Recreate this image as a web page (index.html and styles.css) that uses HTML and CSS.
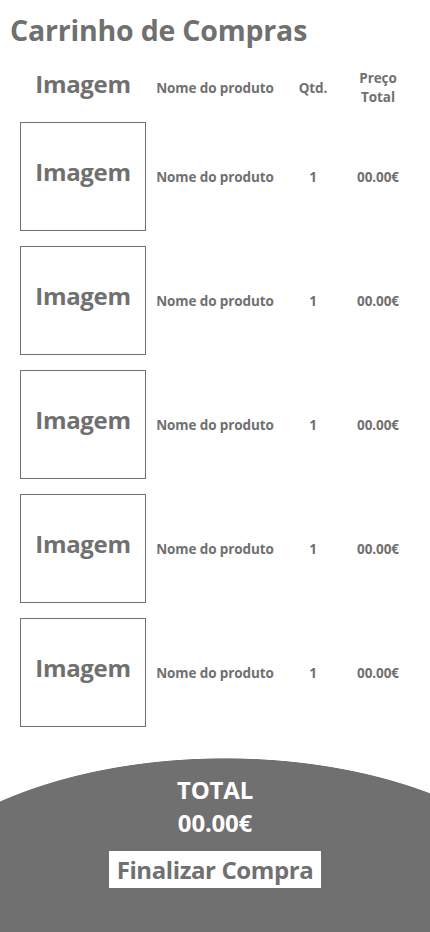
FILE: index.html
```html
<!DOCTYPE html>
<html lang="pt">

<head>
  <meta charset="UTF-8">
  <title>Carrinho de Compras</title>
  <link rel="stylesheet" href="styles.css">
</head>

<body>
  <h1 class="titulo">Carrinho de Compras</h1>

  <div class="carrinho">
    <div class="linha cabecalho">
      <div class="col-img">Imagem</div>
      <div>Nome do produto</div>
      <div>Qtd.</div>
      <div>Preço<br>Total</div>
    </div>

    <div class="linha item">
      <div class="col-img caixa">Imagem</div>
      <div>Nome do produto</div>
      <div>1</div>
      <div>00.00€</div>
    </div>
    <div class="linha item">
      <div class="col-img caixa">Imagem</div>
      <div>Nome do produto</div>
      <div>1</div>
      <div>00.00€</div>
    </div>
    <div class="linha item">
      <div class="col-img caixa">Imagem</div>
      <div>Nome do produto</div>
      <div>1</div>
      <div>00.00€</div>
    </div>
    <div class="linha item">
      <div class="col-img caixa">Imagem</div>
      <div>Nome do produto</div>
      <div>1</div>
      <div>00.00€</div>
    </div>
    <div class="linha item">
      <div class="col-img caixa">Imagem</div>
      <div>Nome do produto</div>
      <div>1</div>
      <div>00.00€</div>
    </div>
  </div>

  <footer class="resumo">
    <div class="total">TOTAL</div>
    <div class="total">00.00€</div>
    <button class="finalizar">Finalizar Compra</button>
  </footer>
</body>

</html>
```

FILE: styles.css
```css
* {
  margin: 0;
  padding: 0;
  box-sizing: border-box;
  font-family: 'Open Sans', sans-serif;
}

body {
  background: white;
  color: #707070;
  width: 430px;
  height: 932px;
  overflow: hidden;
  display: flex;
  flex-direction: column;
}

.titulo {
  font-size: 28.5px;
  font-weight: bold;
  line-height: 36px;
  padding: 12px 10px 0;
  letter-spacing: -0.2px;
}

.carrinho {
  padding: 16px 0 0 20px;
  display: flex;
  flex-direction: column;
  gap: 15px;
}

.linha {
  display: grid;
  grid-template-columns: 126px 138px 58px 72px;
  align-items: center;
  text-align: center;
  font-size: 13.5px;
  font-weight: bold;
  letter-spacing: -0.1px;
}

.cabecalho {
  height: 48px;
  margin-bottom: -5px;
  line-height: 19px;
}

.cabecalho .col-img {
  padding-bottom: 10px;
}

.col-img {
  font-size: 24px;
  letter-spacing: -0.3px;
}

.caixa {
  height: 109px;
  border: 1px solid #707070;
  display: flex;
  align-items: center;
  justify-content: center;
  padding-bottom: 10px;
}

.resumo {
  margin-top: 31px;
  flex: 1;
  background: radial-gradient(ellipse 350px 184px at 225px 184px, #707070 99.6%, transparent 100%);
  display: flex;
  flex-direction: column;
  align-items: center;
  padding-top: 15px;
}

.total {
  color: white;
  font-size: 24px;
  font-weight: bold;
  line-height: 33px;
  letter-spacing: -0.2px;
}

.finalizar {
  margin-top: 12px;
  background: white;
  color: #707070;
  border: none;
  width: 212px;
  height: 37px;
  font-size: 24px;
  font-weight: bold;
  letter-spacing: -0.4px;
}
```
